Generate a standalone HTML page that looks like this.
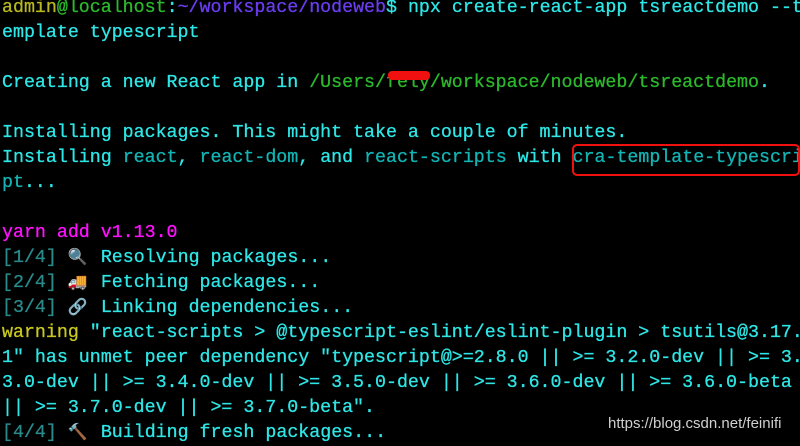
<!DOCTYPE html>
<html><head><meta charset="utf-8"><style>
html,body{margin:0;padding:0;background:#000;width:800px;height:442px;overflow:hidden}
pre{position:absolute;left:2px;top:-4px;margin:0;font-family:"Liberation Mono",monospace;font-size:18.3px;line-height:25px;color:#2ee6e6;white-space:pre;-webkit-text-stroke:0.3px currentColor}
.y{color:#b8b820}.g{color:#2cb82c}.p{color:#6a3cf0}.c{color:#12b4b4}.m{color:#ff10ff}.d{color:#2a8a8a}.w{color:#c8c820}
.e{display:inline-block;width:22px;font-size:16px;text-align:left;-webkit-text-stroke:0}
.box{position:absolute;left:572px;top:144px;width:224px;height:28px;border:2px solid #f01010;border-radius:5px}
.blot{position:absolute;left:388px;top:71px;width:42px;height:9px;background:#f01010;border-radius:4px}
.wm{position:absolute;left:608px;top:415px;font-family:"Liberation Sans",sans-serif;font-size:15px;color:#d0d0d0}
</style></head><body>
<pre><span class="y">admin</span><span class="g">@localhost</span>:<span class="p">~/workspace/nodeweb</span>$ npx create-react-app tsreactdemo --t
emplate typescript

Creating a new React app in <span class="g">/Users/fely/workspace/nodeweb/tsreactdemo</span>.

Installing packages. This might take a couple of minutes.
Installing <span class="c">react</span>, <span class="c">react-dom</span>, and <span class="c">react-scripts</span> with <span class="c">cra-template-typescri</span>
<span class="c">pt</span>...

<span class="m">yarn add v1.13.0</span>
<span class="d">[1/4]</span> <span class="e">🔍</span> Resolving packages...
<span class="d">[2/4]</span> <span class="e">🚚</span> Fetching packages...
<span class="d">[3/4]</span> <span class="e">🔗</span> Linking dependencies...
<span class="w">warning</span> "react-scripts &gt; @typescript-eslint/eslint-plugin &gt; tsutils@3.17.
1" has unmet peer dependency "typescript@&gt;=2.8.0 || &gt;= 3.2.0-dev || &gt;= 3.
3.0-dev || &gt;= 3.4.0-dev || &gt;= 3.5.0-dev || &gt;= 3.6.0-dev || &gt;= 3.6.0-beta
|| &gt;= 3.7.0-dev || &gt;= 3.7.0-beta".
<span class="d">[4/4]</span> <span class="e">🔨</span> Building fresh packages...</pre>
<div class="box"></div>
<div class="blot"></div>
<div class="wm">https://blog.csdn.net/feinifi</div>
</body></html>
